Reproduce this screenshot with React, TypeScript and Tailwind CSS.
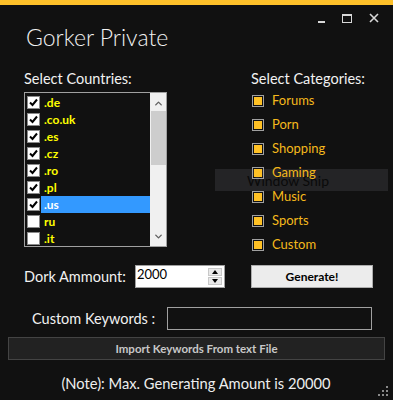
import { ChevronUp, ChevronDown } from 'lucide-react';

const countries = [
  { code: '.de', checked: true },
  { code: '.co.uk', checked: true },
  { code: '.es', checked: true },
  { code: '.cz', checked: true },
  { code: '.ro', checked: true },
  { code: '.pl', checked: true },
  { code: '.us', checked: true, selected: true },
  { code: 'ru', checked: false },
  { code: '.it', checked: false },
];

const categories = ['Forums', 'Porn', 'Shopping', 'Gaming', 'Music', 'Sports', 'Custom'];

function CheckBox({ checked }: { checked: boolean }) {
  return (
    <div className="w-[13px] h-[13px] border border-[#8a8a8a] bg-white flex items-center justify-center shrink-0">
      {checked && (
        <svg width="11" height="11" viewBox="0 0 11 11">
          <path d="M2 5.5 L4.5 8 L9 2.5" fill="none" stroke="#000" strokeWidth="2" />
        </svg>
      )}
    </div>
  );
}

export default function App() {
  return (
    <div
      className="relative w-[393px] h-[400px] bg-[#111111] overflow-hidden text-white"
      style={{ fontFamily: 'Lato, "Open Sans", sans-serif' }}
    >
      {/* snip overlay, sits under the form */}
      <div className="absolute left-[215px] top-[169px] w-[173px] h-[22px] bg-[#242426] flex items-center pl-[32px] text-[14px] text-[#0a0a0a]">
        Window Snip
      </div>

      <div className="relative h-[5px] bg-[#fec12a]" />

      {/* window controls */}
      <div className="relative flex justify-end items-center gap-[17px] pr-[14px] pt-[6px] h-[20px]">
        <div className="w-[7px] h-[2px] bg-[#d8d8d8] mt-[8px]" />
        <div className="w-[10px] h-[9px] border-[#d8d8d8] border-t-[2px] border-x-[1px] border-b-[1px]" />
        <svg width="10" height="10" viewBox="0 0 10 10">
          <path d="M1 1 L9 9 M9 1 L1 9" stroke="#d8d8d8" strokeWidth="1.6" />
        </svg>
      </div>

      <div className="relative pl-[26px] -mt-[3px] text-[23px] leading-[30px] font-light text-[#f2f2f2]">Gorker Private</div>

      <div className="relative flex mt-[18px]">
        {/* countries */}
        <div className="pl-[24px] w-[251px]">
          <div className="text-[14.5px] leading-[18px] text-[#f2f2f2]">Select Countries:</div>
          <div className="mt-[4px] w-[143px] h-[155px] border border-[#a0a0a0] flex">
            <div className="flex-1 pt-[1px]">
              {countries.map((c) => (
                <div key={c.code} className="h-[17px] flex items-center">
                  <div className="w-[15px] flex justify-end pl-[1px]">
                    <CheckBox checked={c.checked} />
                  </div>
                  <div
                    className={`ml-[1px] flex-1 h-[17px] flex items-center pl-[3px] text-[12px] font-bold ${
                      c.selected ? 'bg-[#3399ff] text-white' : 'text-[#ffff00]'
                    }`}
                  >
                    {c.code}
                  </div>
                </div>
              ))}
            </div>
            <div className="w-[16px] bg-[#f0f0f0] flex flex-col items-center">
              <ChevronUp className="w-[11px] h-[11px] mt-[5px] text-[#606060]" strokeWidth={3} />
              <div className="w-[15px] h-[54px] bg-[#cdcdcd] mt-[2px]" />
              <div className="flex-1" />
              <ChevronDown className="w-[11px] h-[11px] mb-[4px] text-[#606060]" strokeWidth={3} />
            </div>
          </div>
        </div>

        {/* categories */}
        <div className="flex-1">
          <div className="text-[14.5px] leading-[18px] text-[#f2f2f2]">Select Categories:</div>
          <div className="mt-[1px] flex flex-col">
            {categories.map((c) => (
              <div key={c} className="h-[24px] flex items-center">
                <div className="ml-[1px] w-[12px] h-[12px] border border-[#a0a0a0] p-[1px]">
                  <div className="w-full h-full bg-[#ffc125]" />
                </div>
                <span className="ml-[8px] text-[13px] text-[#f5b91c]">{c}</span>
              </div>
            ))}
          </div>
        </div>
      </div>

      {/* dork amount + generate */}
      <div className="relative flex items-center mt-[8px] h-[23px]">
        <div className="pl-[24px] w-[135px] whitespace-nowrap text-[14.5px] text-[#f2f2f2]">Dork Ammount:</div>
        <div className="w-[90px] h-[23px] border border-[#a0a0a0] bg-white flex">
          <div className="flex-1 pl-[1px] text-[13px] leading-[17px] text-black">2000</div>
          <div className="w-[14px] my-[2px] mr-[2px] flex flex-col gap-[1px]">
            <div className="flex-1 bg-[#e8e8e8] border border-[#c8c8c8] flex items-center justify-center">
              <div className="w-0 h-0 border-x-[3px] border-x-transparent border-b-[4px] border-b-black" />
            </div>
            <div className="flex-1 bg-[#e8e8e8] border border-[#c8c8c8] flex items-center justify-center">
              <div className="w-0 h-0 border-x-[3px] border-x-transparent border-t-[4px] border-t-black" />
            </div>
          </div>
        </div>
        <div className="ml-[26px] w-[122px] h-[23px] bg-[#ececec] border border-[#adadad] flex items-center justify-center text-[12px] font-bold text-black">
          Generate!
        </div>
      </div>

      {/* custom keywords */}
      <div className="relative flex items-center mt-[19px] h-[23px]">
        <div className="pl-[32px] w-[167px] whitespace-nowrap text-[14.5px] text-[#f2f2f2]">Custom Keywords :</div>
        <div className="w-[205px] h-[23px] border border-[#a0a0a0] bg-[#111111]" />
      </div>

      <div className="relative mx-[8px] mt-[7px] h-[23px] bg-[#222222] border border-[#444444] flex items-center justify-center text-[11.5px] font-bold text-[#c8c8c8]">
        Import Keywords From text File
      </div>

      <div className="relative mt-[12px] text-center text-[14.7px] text-[#eeeeee] pr-[1px]">
        (Note): Max. Generating Amount is 20000
      </div>

      {/* resize grip */}
      <div className="absolute right-[5px] bottom-[4px] grid grid-cols-3 gap-[2px]">
        {[0, 0, 1, 0, 1, 1, 1, 1, 1].map((v, i) => (
          <div key={i} className={`w-[2px] h-[2px] ${v ? 'bg-[#8a8a8a]' : 'bg-transparent'}`} />
        ))}
      </div>
    </div>
  );
}
